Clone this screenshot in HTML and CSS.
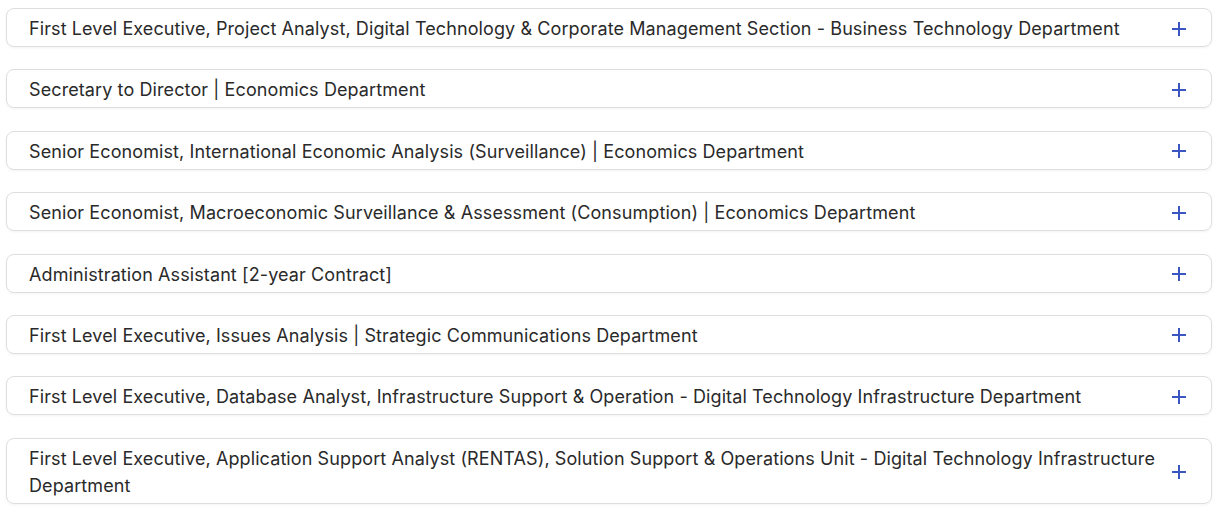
FILE: index.html
```html
<!DOCTYPE html>
<html lang="en">

<head>
    <meta charset="UTF-8">
    <meta name="viewport" content="width=device-width, initial-scale=1.0">
    <title>Careers</title>
    <link rel="stylesheet" href="styles.css">
</head>

<body>
    <div class="job-list">
        <div class="job-item">
            <span class="job-title">First Level Executive, Project Analyst, Digital Technology &amp; Corporate Management Section - Business Technology Department</span>
            <svg class="plus" viewBox="0 0 14 14"><path d="M7 0v14M0 7h14"/></svg>
        </div>
        <div class="job-item">
            <span class="job-title">Secretary to Director | Economics Department</span>
            <svg class="plus" viewBox="0 0 14 14"><path d="M7 0v14M0 7h14"/></svg>
        </div>
        <div class="job-item">
            <span class="job-title">Senior Economist, International Economic Analysis (Surveillance) | Economics Department</span>
            <svg class="plus" viewBox="0 0 14 14"><path d="M7 0v14M0 7h14"/></svg>
        </div>
        <div class="job-item">
            <span class="job-title">Senior Economist, Macroeconomic Surveillance &amp; Assessment (Consumption) | Economics Department</span>
            <svg class="plus" viewBox="0 0 14 14"><path d="M7 0v14M0 7h14"/></svg>
        </div>
        <div class="job-item">
            <span class="job-title">Administration Assistant [2-year Contract]</span>
            <svg class="plus" viewBox="0 0 14 14"><path d="M7 0v14M0 7h14"/></svg>
        </div>
        <div class="job-item">
            <span class="job-title">First Level Executive, Issues Analysis | Strategic Communications Department</span>
            <svg class="plus" viewBox="0 0 14 14"><path d="M7 0v14M0 7h14"/></svg>
        </div>
        <div class="job-item">
            <span class="job-title">First Level Executive, Database Analyst, Infrastructure Support &amp; Operation - Digital Technology Infrastructure Department</span>
            <svg class="plus" viewBox="0 0 14 14"><path d="M7 0v14M0 7h14"/></svg>
        </div>
        <div class="job-item">
            <span class="job-title">First Level Executive, Application Support Analyst (RENTAS), Solution Support &amp; Operations Unit - Digital Technology Infrastructure Department</span>
            <svg class="plus" viewBox="0 0 14 14"><path d="M7 0v14M0 7h14"/></svg>
        </div>
    </div>
</body>

</html>
```

FILE: styles.css
```css
body {
    font-family: Inter, "Noto Sans", sans-serif;
    margin: 0;
    padding: 8px 9px 8px 6px;
    background-color: #fff;
    color: #2a2a2a;
}

.job-list {
    display: flex;
    flex-direction: column;
    gap: 22.4px;
}

.job-item {
    display: flex;
    align-items: center;
    justify-content: space-between;
    gap: 8px;
    padding: 6px 25px 4px 22px;
    border: 1px solid #dedede;
    border-radius: 8px;
    box-shadow: 0 1px 3px rgba(0, 0, 0, 0.05);
}

.job-title {
    font-size: 18px;
    line-height: 27px;
    letter-spacing: 0.1px;
}

.plus {
    flex: none;
    width: 14px;
    height: 14px;
    stroke: #3a56c0;
    stroke-width: 2;
    fill: none;
}
```
